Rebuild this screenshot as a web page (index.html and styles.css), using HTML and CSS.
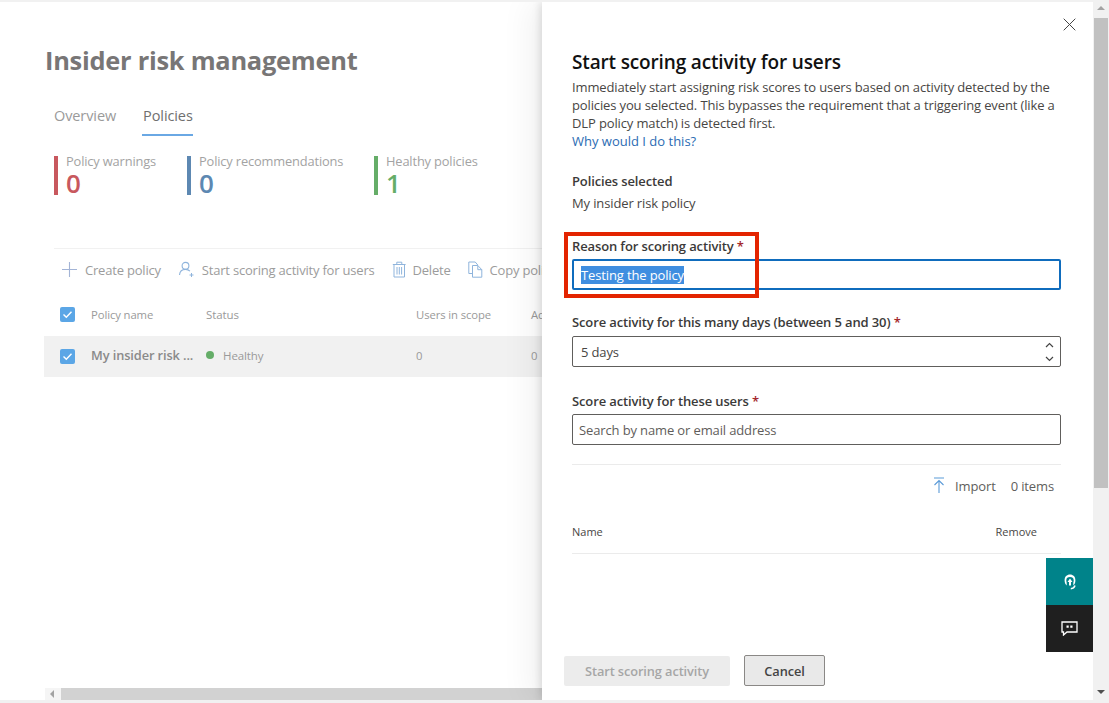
FILE: index.html
```html
<!DOCTYPE html>
<html lang="en">
<head>
<meta charset="utf-8">
<title>Insider risk management</title>
<link rel="stylesheet" href="styles.css">
</head>
<body>
<div class="window">
  <div class="page">
    <main class="main">
      <h1 class="page-title">Insider risk management</h1>
      <nav class="tabs">
        <span class="tab">Overview</span>
        <span class="tab tab-active">Policies</span>
      </nav>
      <section class="stats">
        <div class="stat stat-red"><span class="stat-label">Policy warnings</span><span class="stat-value">0</span></div>
        <div class="stat stat-blue"><span class="stat-label">Policy recommendations</span><span class="stat-value">0</span></div>
        <div class="stat stat-green"><span class="stat-label">Healthy policies</span><span class="stat-value">1</span></div>
      </section>
      <div class="toolbar">
        <span class="action">
          <svg class="action-icon" width="17" height="17" viewBox="0 0 17 17"><path d="M8.5 1v15M1 8.5h15" fill="none" stroke="#a3b4d6" stroke-width="1.1"/></svg>Create policy
        </span>
        <span class="action">
          <svg class="action-icon" width="17" height="17" viewBox="0 0 17 17"><circle cx="7.5" cy="4.8" r="3.4" fill="none" stroke="#8fb4dc" stroke-width="1.1"/><path d="M1.5 14c.3-3.600 2.600-5.600 6-5.600 2 0 3.400.6 4.400 1.800" fill="none" stroke="#8fb4dc" stroke-width="1.1"/><path d="M13.500 12v4M11.500 14h4" fill="none" stroke="#8fb4dc" stroke-width="1"/></svg>Start scoring activity for users
        </span>
        <span class="action">
          <svg class="action-icon" width="14" height="17" viewBox="0 0 14 17"><path d="M2 3.500h10.500V16H2zM.8 3.500h12.800M4.800 3.500V1.200h5v2.300M5 6v7.500M7.300 6v7.500M9.600 6v7.500" fill="none" stroke="#8fb4dc" stroke-width="1"/></svg>Delete
        </span>
        <span class="action">
          <svg class="action-icon" width="15" height="17" viewBox="0 0 15 17"><path d="M4.500 12.500H.8V1h6.400l2.600 3" fill="none" stroke="#8fb4dc" stroke-width="1"/><path d="M4.500 4.500h5.300l4 4.200v7.500H4.500zM9.800 4.500v4.200h4" fill="none" stroke="#8fb4dc" stroke-width="1"/></svg>Copy policy
        </span>
      </div>
      <div class="table">
        <div class="row row-head">
          <span class="check"><svg width="11" height="9" viewBox="0 0 11 9"><path d="M1.500 4.500l2.800 2.800 5.200-5.600" fill="none" stroke="#fff" stroke-width="1.400"/></svg></span>
          <span class="cell cell-name">Policy name</span>
          <span class="cell cell-status">Status</span>
          <span class="cell cell-users">Users in scope</span>
          <span class="cell cell-last">Ac</span>
        </div>
        <div class="row row-selected">
          <span class="check"><svg width="11" height="9" viewBox="0 0 11 9"><path d="M1.500 4.500l2.800 2.800 5.200-5.600" fill="none" stroke="#fff" stroke-width="1.400"/></svg></span>
          <span class="cell cell-name cell-strong">My insider risk ...</span>
          <span class="cell cell-status"><i class="dot"></i>Healthy</span>
          <span class="cell cell-users">0</span>
          <span class="cell cell-last">0</span>
        </div>
      </div>
      <div class="hscroll">
        <span class="hscroll-arrow"></span>
        <span class="hscroll-thumb"></span>
      </div>
    </main>

    <aside class="panel">
      <button class="close" aria-label="Close">
        <svg width="13" height="13" viewBox="0 0 13 13"><path d="M.7.7l11.600 11.600M12.300.7L.7 12.300" fill="none" stroke="#444" stroke-width="1"/></svg>
      </button>
      <h2 class="panel-title">Start scoring activity for users</h2>
      <p class="panel-desc">Immediately start assigning risk scores to users based on activity detected by the policies you selected. This bypasses the requirement that a triggering event (like a DLP policy match) is detected first.<br><a class="link">Why would I do this?</a></p>
      <h3 class="label label-policies">Policies selected</h3>
      <p class="policy-name">My insider risk policy</p>

      <div class="field field-reason">
        <label class="label">Reason for scoring activity <b class="req">*</b></label>
        <div class="input input-focus"><span class="selected">Testing the policy</span></div>
      </div>
      <div class="field field-days">
        <label class="label">Score activity for this many days (between 5 and 30) <b class="req">*</b></label>
        <div class="input input-spin">
          <span class="input-text">5 days</span>
          <span class="spin">
            <svg width="9" height="6" viewBox="0 0 9 6"><path d="M1 5l3.500-3.500L8 5" fill="none" stroke="#444" stroke-width="1.200"/></svg>
            <svg width="9" height="6" viewBox="0 0 9 6"><path d="M1 1l3.500 3.500L8 1" fill="none" stroke="#444" stroke-width="1.200"/></svg>
          </span>
        </div>
      </div>
      <div class="field field-users">
        <label class="label">Score activity for these users <b class="req">*</b></label>
        <div class="input input-search"><span class="placeholder">Search by name or email address</span></div>
      </div>
      <div class="import-bar">
        <svg class="import-icon" width="12" height="17" viewBox="0 0 12 17"><path d="M1 1h10M6 16V3.500M1.500 8L6 3.500 10.500 8" fill="none" stroke="#5b9bd8" stroke-width="1.100"/></svg>
        <span class="import-label">Import</span>
        <span>0 items</span>
      </div>
      <div class="list-head"><span>Name</span><span class="list-remove">Remove</span></div>
      <div class="panel-footer">
        <button class="btn btn-disabled">Start scoring activity</button>
        <button class="btn btn-cancel">Cancel</button>
      </div>
      <div class="float-buttons">
        <span class="float float-teal">
          <svg width="12" height="16" viewBox="0 0 12 16"><path d="M2.700 11.500C1.400 10.500.6 9 .6 6.300.6 2.800 2.800.6 6 .6s5.400 2.200 5.400 5.700c0 2.700-.8 4.200-2.100 5.200V8.800c.3-.7.400-1.500.4-2.500C9.700 4 8.300 3 6 3S2.300 4 2.300 6.300c0 1 .1 1.800.4 2.500z" fill="#fff"/><path d="M6 4.500L8.500 8H7v3.500H5V8H3.500z" fill="#fff"/><path d="M11 11.500c-.6 2-1.900 3-4.200 3.200" fill="none" stroke="#fff" stroke-width="1.500"/></svg>
        </span>
        <span class="float float-dark">
          <svg width="17" height="15" viewBox="0 0 17 15"><path d="M1 1h15v10H6l-3.500 3v-3H1z" fill="none" stroke="#fff" stroke-width="1.300"/><path d="M5.500 4.500h2.200v2.200H5.500zM9.300 4.500h2.200v2.200H9.300z" fill="#fff"/></svg>
        </span>
      </div>
    </aside>

    <div class="vscroll">
      <span class="vscroll-arrow vscroll-up"></span>
      <span class="vscroll-thumb"></span>
      <span class="vscroll-arrow vscroll-down"></span>
    </div>
  </div>
</div>
</body>
</html>
```
FILE: styles.css
```css
*, *::before, *::after { box-sizing: border-box; }
html, body { margin: 0; padding: 0; height: 100%; overflow: hidden; }
body { background: #fff; font-family: "Open Sans", "Noto Sans", "Liberation Sans", sans-serif; color: #323130; }
.window { width: 1109px; height: 703px; padding: 2px 0 3px; background: #f1f1f1; }
.page { position: relative; height: 698px; background: #fff; display: flex; overflow: hidden; }

.main { width: 542px; flex: none; padding: 0 0 0 45px; overflow: hidden; position: relative; }
.page-title { margin: 40px 0 0; font-size: 25.400px; line-height: 36px; font-weight: 700; color: #787676; white-space: nowrap; letter-spacing: -.25px; }
.tabs { display: flex; gap: 26px; margin: 25px 0 0 9px; height: 37px; }
.tab { font-size: 14.500px; line-height: 26px; color: #9a9a9a; height: 100%; letter-spacing: -.1px; }
.tab-active { color: #6f6f6f; border-bottom: 2px solid #6aa8e4; padding: 0 0 0 1px; height: 33px; }

.stats { display: flex; margin: 16px 0 0 9px; height: 40px; }
.stat { border-left: 4px solid; padding-left: 8px; height: 39px; display: flex; flex-direction: column; position: relative; }
.stat-red { border-color: #c8585e; width: 133px; color: #c8585e; }
.stat-blue { border-color: #5d88b2; width: 187px; color: #5d88b2; }
.stat-green { border-color: #65ad68; color: #65ad68; }
.stat-label { font-size: 12.850px; line-height: 16px; color: #a3a3a3; white-space: nowrap; margin-top: -3px; letter-spacing: -.15px; }
.stat-value { font-size: 26px; line-height: 24px; font-weight: 600; margin-top: 2px; }

.toolbar { display: flex; align-items: center; margin: 52px 0 0 9px; padding: 0 0 0 7px; border-top: 1px solid #f1f1f1; height: 42px; white-space: nowrap; }
.action { display: inline-flex; align-items: center; font-size: 13px; color: #9c9c9c; margin-right: 17px; letter-spacing: -.2px; }
.action-icon { margin-right: 7px; flex: none; }

.table { margin: 0 0 0 -1px; width: 520px; }
.row { display: flex; align-items: center; position: relative; padding-left: 16px; white-space: nowrap; }
.row-head { height: 43px; margin-top: 3px; }
.row-selected { height: 41px; background: #f1f1f1; }
.row-selected .cell { margin-bottom: 3px; }
.check { width: 15px; height: 15px; border-radius: 2px; background: #5ba6e6; display: flex; align-items: center; justify-content: center; flex: none; }
.cell { font-size: 11.300px; color: #9a9a9a; flex: none; letter-spacing: -.1px; }
.cell-name { width: 115px; margin-left: 16px; }
.cell-strong { font-size: 12.800px; font-weight: 600; color: #8a8a8a; }
.cell-status { width: 210px; display: flex; align-items: center; font-size: 11.500px; }
.cell-users { width: 115px; }
.dot { width: 8px; height: 8px; border-radius: 50%; background: #65ad68; margin-right: 9px; }

.hscroll { position: absolute; left: 45px; right: 0; top: 686px; height: 12px; display: flex; }
.hscroll-arrow { width: 16px; background: #f5f5f5; position: relative; flex: none; }
.hscroll-arrow::before { content: ""; position: absolute; left: 5px; top: 2px; border: 4px solid transparent; border-left: 0; border-right: 4px solid #a3a3a3; }
.hscroll-thumb { flex: 1; background: #d2d2d2; }

.panel { width: 551px; flex: none; position: relative; z-index: 1; background: #fff; box-shadow: -2px 0 8px rgba(0,0,0,.12), -12px 0 30px rgba(0,0,0,.06); padding: 0 32px 0 30px; }
.close { position: absolute; right: 17px; top: 16px; width: 13px; height: 13px; padding: 0; border: 0; background: none; line-height: 0; }
.panel-title { margin: 47px 0 0; font-size: 19px; line-height: 26px; font-weight: 600; color: #111; white-space: nowrap; letter-spacing: -.15px; }
.panel-desc { margin: 3px 0 0; font-size: 13px; line-height: 18px; color: #484644; letter-spacing: -.13px; }
.link { color: #2b6cb3; letter-spacing: 0; }
.label { display: block; margin: 0; font-size: 13px; line-height: 18px; font-weight: 600; color: #3b3a39; letter-spacing: -.13px; white-space: nowrap; }
.label-policies { margin-top: 22px; }
.policy-name { margin: 4px 0 0; font-size: 13px; line-height: 18px; color: #484644; letter-spacing: -.13px; }
.req { color: #a4262c; font-weight: 600; }
.field-reason { margin-top: 25px; position: relative; }
.field-reason::before { content: ""; position: absolute; left: -8px; top: -5px; width: 195px; height: 66px; border: 4px solid #e32400; pointer-events: none; z-index: 1; }
.field-days { margin-top: 23px; }
.field-users { margin-top: 25px; }
.input { margin-top: 5px; height: 31px; border: 1px solid #605e5c; border-radius: 2px; font-size: 13px; letter-spacing: -.13px; color: #484644; display: flex; align-items: center; }
.input-focus { border: 2px solid #0f6cbd; padding-left: 7px; margin-top: 4px; }
.selected { background: #3f8ee0; color: #fff; line-height: 18px; }
.input-spin { padding: 0 6px 0 8px; justify-content: space-between; }
.spin { display: flex; flex-direction: column; gap: 8px; line-height: 0; }
.input-search { padding-left: 6px; margin-top: 4px; }
.placeholder { color: #5f5d5b; }
.import-bar { margin-top: 19px; border-top: 1px solid #ebebeb; height: 42px; display: flex; align-items: center; justify-content: flex-end; font-size: 13px; color: #605e5c; padding-right: 7px; letter-spacing: -.13px; }
.import-icon { margin-right: 10px; }
.import-label { margin-right: 15px; }
.list-head { margin-top: 7px; height: 41px; padding-bottom: 4px; display: flex; align-items: center; justify-content: space-between; border-bottom: 1px solid #ebebeb; font-size: 11px; font-weight: 500; color: #484644; padding-right: 24px; }
.list-remove { font-weight: 400; }
.panel-footer { position: absolute; left: 22px; top: 653px; display: flex; gap: 14px; align-items: stretch; }
.btn { height: 31px; font: inherit; font-size: 12.800px; font-weight: 600; border-radius: 2px; padding: 0; letter-spacing: -.1px; }
.btn-disabled { width: 166px; background: #ececec; border: 0; color: #a6a6a6; margin-top: 1px; height: 30px; }
.btn-cancel { width: 81px; background: #e9e9e9; border: 1px solid #8a8886; color: #444; }
.float-buttons { position: absolute; right: 0; top: 556px; width: 47px; display: flex; flex-direction: column; }
.float { height: 47px; display: flex; align-items: center; justify-content: center; }
.float-teal { background: #00838a; }
.float-dark { background: #1f1f1f; }

.vscroll { width: 16px; flex: none; background: #f1f1f1; display: flex; flex-direction: column; position: relative; z-index: 2; }
.vscroll-arrow { height: 16px; flex: none; position: relative; }
.vscroll-up::before, .vscroll-down::before { content: ""; position: absolute; left: 4px; border: 4px solid transparent; }
.vscroll-up::before { top: 4px; border-top: 0; border-bottom: 4px solid #a3a3a3; }
.vscroll-down::before { top: 6px; border-bottom: 0; border-top: 4px solid #505050; }
.vscroll-thumb { height: 470px; margin: 0 1px; background: #c1c1c1; }
.vscroll-down { margin-top: auto; }
```
